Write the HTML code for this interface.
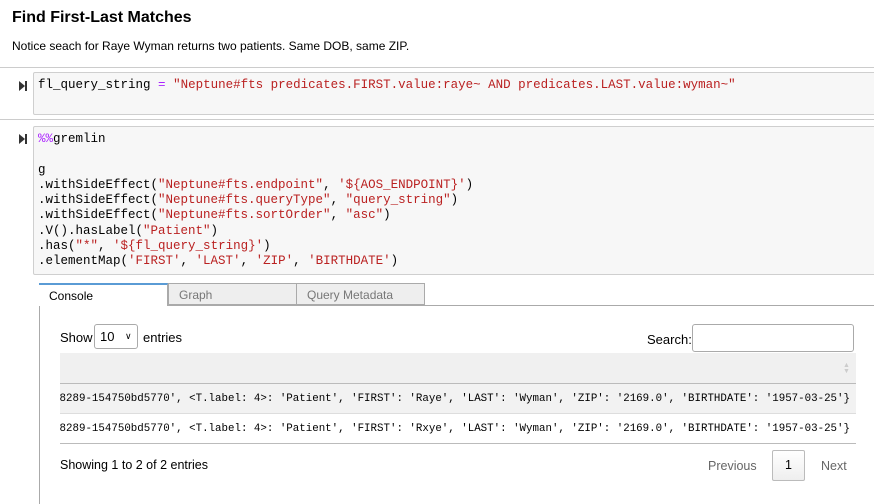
<!DOCTYPE html>
<html><head><meta charset="utf-8"><style>
body{margin:0;width:874px;height:504px;overflow:hidden;background:#fff;font-family:"Liberation Sans",sans-serif;color:#000;position:relative}
.a{position:absolute}
.code{font-family:"Liberation Mono",monospace;font-size:12.5px;line-height:15.3px;white-space:pre;color:#000}
.s{color:#ba2121}.o{color:#aa22ff}
.box{background:#f7f7f7;border:1px solid #cfcfcf;border-radius:2px}
.run{width:0;height:0;border-top:5px solid transparent;border-bottom:5px solid transparent;border-left:6px solid #333}
.tab{font-size:12px;height:22px;line-height:22px;padding-left:10px;box-sizing:border-box}
.row{font-family:"Liberation Mono",monospace;font-size:10.8px;white-space:nowrap;overflow:hidden;display:flex;justify-content:flex-end;align-items:center;padding-right:6px;box-sizing:border-box}
</style></head><body>
<div class="a" style="left:12px;top:9px;font-size:16px;font-weight:bold">Find First-Last Matches</div>
<div class="a" style="left:12px;top:39px;font-size:12px">Notice seach for Raye Wyman returns two patients. Same DOB, same ZIP.</div>
<div class="a" style="left:0;top:67px;width:874px;border-top:1px solid #ccc"></div>
<div class="a" style="left:0;top:119px;width:874px;border-top:1px solid #ccc"></div>
<div class="a run" style="left:19px;top:81px"></div><div class="a" style="left:25px;top:81px;width:2px;height:10px;background:#333"></div>
<div class="a run" style="left:19px;top:134px"></div><div class="a" style="left:25px;top:134px;width:2px;height:10px;background:#333"></div>
<div class="a box" style="left:33px;top:72px;width:850px;height:41px"></div>
<div class="a code" style="left:38px;top:78px">fl_query_string <span class="o">=</span> <span class="s">"Neptune#fts predicates.FIRST.value:raye~ AND predicates.LAST.value:wyman~"</span></div>
<div class="a box" style="left:33px;top:126px;width:850px;height:147px"></div>
<div class="a code" style="left:38px;top:132px"><span class="o">%%</span>gremlin

g
.withSideEffect(<span class="s">"Neptune#fts.endpoint"</span>, <span class="s">'${AOS_ENDPOINT}'</span>)
.withSideEffect(<span class="s">"Neptune#fts.queryType"</span>, <span class="s">"query_string"</span>)
.withSideEffect(<span class="s">"Neptune#fts.sortOrder"</span>, <span class="s">"asc"</span>)
.V().hasLabel(<span class="s">"Patient"</span>)
.has(<span class="s">"*"</span>, <span class="s">'${fl_query_string}'</span>)
.elementMap(<span class="s">'FIRST'</span>, <span class="s">'LAST'</span>, <span class="s">'ZIP'</span>, <span class="s">'BIRTHDATE'</span>)</div>
<div class="a" style="left:39px;top:305px;width:835px;border-top:1px solid #aaa"></div>
<div class="a" style="left:39px;top:283px;width:1px;height:221px;background:#aaa"></div>
<div class="a tab" style="left:39px;top:283px;width:129px;height:23px;background:#fff;border-top:2px solid #5a9bd5;border-right:1px solid #aaa">Console</div>
<div class="a tab" style="left:168px;top:283px;width:129px;background:#eee;border:1px solid #aaa;color:#777">Graph</div>
<div class="a tab" style="left:296px;top:283px;width:129px;background:#eee;border:1px solid #aaa;color:#777">Query Metadata</div>
<div class="a" style="left:60px;top:330px;font-size:13px">Show</div>
<div class="a" style="left:94px;top:324px;width:44px;height:25px;border:1px solid #aaa;border-radius:3px;box-sizing:border-box;font-size:13px;line-height:23px;padding-left:5px">10<span style="position:absolute;left:30px;font-size:9px">&#8744;</span></div>
<div class="a" style="left:143px;top:330px;font-size:13px">entries</div>
<div class="a" style="left:647px;top:332px;font-size:13px">Search:</div>
<div class="a" style="left:692px;top:324px;width:162px;height:28px;border:1px solid #aaa;border-radius:3px;box-sizing:border-box"></div>
<div class="a" style="left:60px;top:353px;width:796px;height:30px;background:#f0f0f0;border-bottom:1px solid #bbb"></div>
<div class="a" style="left:843px;top:363px;font-size:7px;color:#ccc;line-height:6px">▲<br>▼</div>
<div class="a row" style="left:60px;top:384px;width:796px;height:30px;background:#f2f2f2;border-bottom:1px solid #ddd">{&lt;T.id: 1&gt;: 'ab12cd34-aaaa-4bcd-8289-154750bd5770', &lt;T.label: 4&gt;: 'Patient', 'FIRST': 'Raye', 'LAST': 'Wyman', 'ZIP': '2169.0', 'BIRTHDATE': '1957-03-25'}</div>
<div class="a row" style="left:60px;top:414px;width:796px;height:30px;border-bottom:1px solid #bbb">{&lt;T.id: 1&gt;: 'ab12cd34-aaaa-4bcd-8289-154750bd5770', &lt;T.label: 4&gt;: 'Patient', 'FIRST': 'Rxye', 'LAST': 'Wyman', 'ZIP': '2169.0', 'BIRTHDATE': '1957-03-25'}</div>
<div class="a" style="left:60px;top:458px;font-size:12.5px">Showing 1 to 2 of 2 entries</div>
<div class="a" style="left:708px;top:459px;font-size:12.5px;color:#666">Previous</div>
<div class="a" style="left:772px;top:450px;width:33px;height:31px;border:1px solid #bbb;border-radius:2px;box-sizing:border-box;background:linear-gradient(#fff,#eee);font-size:12.5px;text-align:center;line-height:29px">1</div>
<div class="a" style="left:821px;top:459px;font-size:12.5px;color:#666">Next</div>
</body></html>
